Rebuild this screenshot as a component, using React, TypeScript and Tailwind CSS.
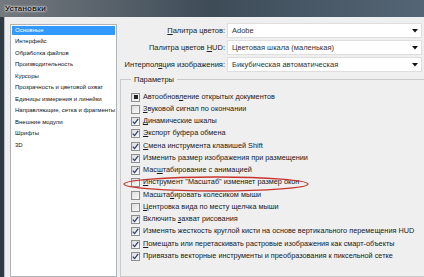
import React from "react";

const font = { fontFamily: '"Liberation Sans", Arial, sans-serif' };

const sections = [
  "Основные",
  "Интерфейс",
  "Обработка файлов",
  "Производительность",
  "Курсоры",
  "Прозрачность и цветовой охват",
  "Единицы измерения и линейки",
  "Направляющие, сетка и фрагменты",
  "Внешние модули",
  "Шрифты",
  "3D",
];

type Opt = { pre: string; key: string; post: string; state: "on" | "off" | "dot" };

const options: Opt[] = [
  { pre: "Автообнов", key: "л", post: "ение открытых документов", state: "dot" },
  { pre: "", key: "З", post: "вуковой сигнал по окончании", state: "off" },
  { pre: "", key: "Д", post: "инамические шкалы", state: "on" },
  { pre: "", key: "Э", post: "кспорт буфера обмена", state: "on" },
  { pre: "", key: "С", post: "мена инструмента клавишей Shift", state: "on" },
  { pre: "Изменить размер изображения при размещении", key: "", post: "", state: "on" },
  { pre: "Мас", key: "ш", post: "табирование с анимацией", state: "on" },
  { pre: "", key: "И", post: "нструмент \"Масштаб\" изменяет размер окон", state: "off" },
  { pre: "Масшта", key: "б", post: "ировать колесиком мыши", state: "off" },
  { pre: "", key: "Ц", post: "ентровка вида по месту щелчка мыши", state: "off" },
  { pre: "Включить ", key: "з", post: "ахват рисования", state: "on" },
  { pre: "Изменять жесткость круглой кисти на основе вертикального перемещения HUD", key: "", post: "", state: "on" },
  { pre: "", key: "П", post: "омещать или перетаскивать растровые изображения как смарт-объекты", state: "on" },
  { pre: "Привязать векторные инструменты и преобразования к пиксельной сетке", key: "", post: "", state: "on" },
];

function Box({ state }: { state: Opt["state"] }) {
  return (
    <span className="flex h-[9px] w-[9px] shrink-0 items-center justify-center border border-[#8e8f8f] bg-gradient-to-br from-[#dcdcdc] to-[#fbfbfb]">
      {state === "on" && (
        <svg width="7" height="7" viewBox="0 0 7 7">
          <path d="M0.8 3.6 L2.6 5.6 L6.2 0.9" fill="none" stroke="#2c3f7a" strokeWidth="1.3" />
        </svg>
      )}
      {state === "dot" && <span className="h-[4px] w-[4px] bg-[#222]" />}
    </span>
  );
}

function Select({ label, k, rest, value }: { label: string; k: string; rest: string; value: string }) {
  return (
    <div className="flex h-[17px] items-center">
      <span className="w-[107px] pr-[2px] text-right text-[7.5px] text-[#222]">
        {label}
        <span className="underline">{k}</span>
        {rest}
      </span>
      <div className="flex h-[15px] flex-1 items-center justify-between border border-[#dedede] bg-white pl-[4px] pr-[3px] text-[7.5px] text-[#333]">
        <span>{value}</span>
        <svg width="6" height="4" viewBox="0 0 6 4">
          <path d="M0 0 H6 L3 3.5 Z" fill="#111" />
        </svg>
      </div>
    </div>
  );
}

export default function App() {
  return (
    <div className="flex h-[277px] w-[424px] flex-col overflow-hidden bg-[#2e3a44]" style={font}>
      <div className="flex h-[17px] shrink-0 items-center bg-gradient-to-r from-[#74797e] via-[#3e4c58] to-[#546575] pl-[5px] text-[8px] font-semibold text-[#1c1c1c] [text-shadow:0_0_3px_#fff,0_0_2px_#fff]">
        Установки
      </div>
      <div className="ml-[4px] flex flex-1 border-l border-[#b9bec3] bg-[#efefef] pl-[5px] pt-[7px]">
        <div className="w-[107px] shrink-0 border border-[#aeb3b8] bg-white p-[1px]">
          {sections.map((s, i) => (
            <div
              key={s}
              className={
                i === 0
                  ? "flex h-[8.5px] items-center whitespace-nowrap bg-[#3399ff] pl-[3px] text-[6px] text-white"
                  : "mt-[3px] flex h-[8.5px] items-center whitespace-nowrap pl-[3px] text-[6px] text-[#111]"
              }
            >
              {s}
            </div>
          ))}
        </div>
        <div className="flex flex-1 flex-col pl-[3px]">
          <div className="-mt-[2px] flex flex-col pr-[2px]">
            <Select label="" k="П" rest="алитра цветов:" value="Adobe" />
            <Select label="Палитра цветов " k="H" rest="UD:" value="Цветовая шкала (маленькая)" />
            <Select label="Интерпол" k="я" rest="ция изображения:" value="Бикубическая автоматическая" />
          </div>
          <div className="relative -mr-[12px] mt-[6px] flex-1 border border-[#c9c9c9] pl-[10px] pt-[11px]">
            <span className="absolute -top-[5px] left-[10px] bg-[#efefef] px-[3px] text-[7.5px] leading-[9px] text-[#222]">
              Параметры
            </span>
            {options.map((o, i) => (
              <div key={i} className="flex h-[12.25px] items-center gap-[3px] text-[7.3px] text-[#1a1a1a]">
                <Box state={o.state} />
                <span className="whitespace-nowrap">
                  {o.pre}
                  {o.key && <span className="underline">{o.key}</span>}
                  {o.post}
                </span>
              </div>
            ))}
            <svg className="absolute left-[1px] top-[95px]" width="190" height="18" viewBox="0 0 190 18">
              <ellipse cx="94" cy="9" rx="92" ry="7" fill="none" stroke="#c8342c" strokeWidth="1.3" />
            </svg>
          </div>
        </div>
      </div>
    </div>
  );
}
